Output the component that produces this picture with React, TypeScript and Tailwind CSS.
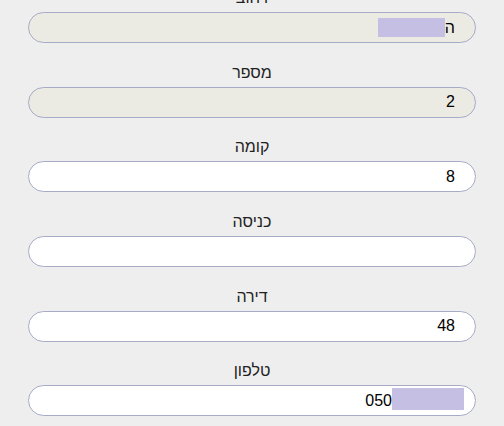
import React from 'react';

type Field = {
  label: string;
  disabled?: boolean;
  content?: React.ReactNode;
};

const fields: Field[] = [
  {
    label: 'רחוב',
    disabled: true,
    content: (
      <div className="flex items-center" dir="rtl">
        <span>ה</span>
        <span className="inline-block w-[67px] h-[19px] bg-[#c5bfe3]" />
      </div>
    ),
  },
  { label: 'מספר', disabled: true, content: <span>2</span> },
  { label: 'קומה', content: <span>8</span> },
  { label: 'כניסה' },
  { label: 'דירה', content: <span>48</span> },
  {
    label: 'טלפון',
    content: (
      <div className="flex items-center mr-[-9px]">
        <span>050</span>
        <span className="inline-block w-[72px] h-[22px] mb-[4px] bg-[#c5bfe3]" />
      </div>
    ),
  },
];

export default function App() {
  return (
    <div
      className="w-[504px] h-[426px] overflow-hidden bg-[#eeeeee] text-[16px] text-black"
      style={{ fontFamily: '"Liberation Sans", Arial, sans-serif' }}
    >
      <div className="mt-[-11px] px-[28px]">
        {fields.map((f) => (
          <div key={f.label} className="mb-[20.66px]">
            {/* label */}
            <div className="h-[18px] mb-[5px] text-center leading-[18px] text-[#222222]" dir="rtl">
              {f.label}
            </div>
            <div
              className={`h-[31px] rounded-full border border-[#a6abc6] flex items-center justify-end pr-5 pl-5 ${
                f.disabled ? 'bg-[#ebeae3]' : 'bg-white'
              }`}
            >
              {f.content}
            </div>
          </div>
        ))}
      </div>
    </div>
  );
}
